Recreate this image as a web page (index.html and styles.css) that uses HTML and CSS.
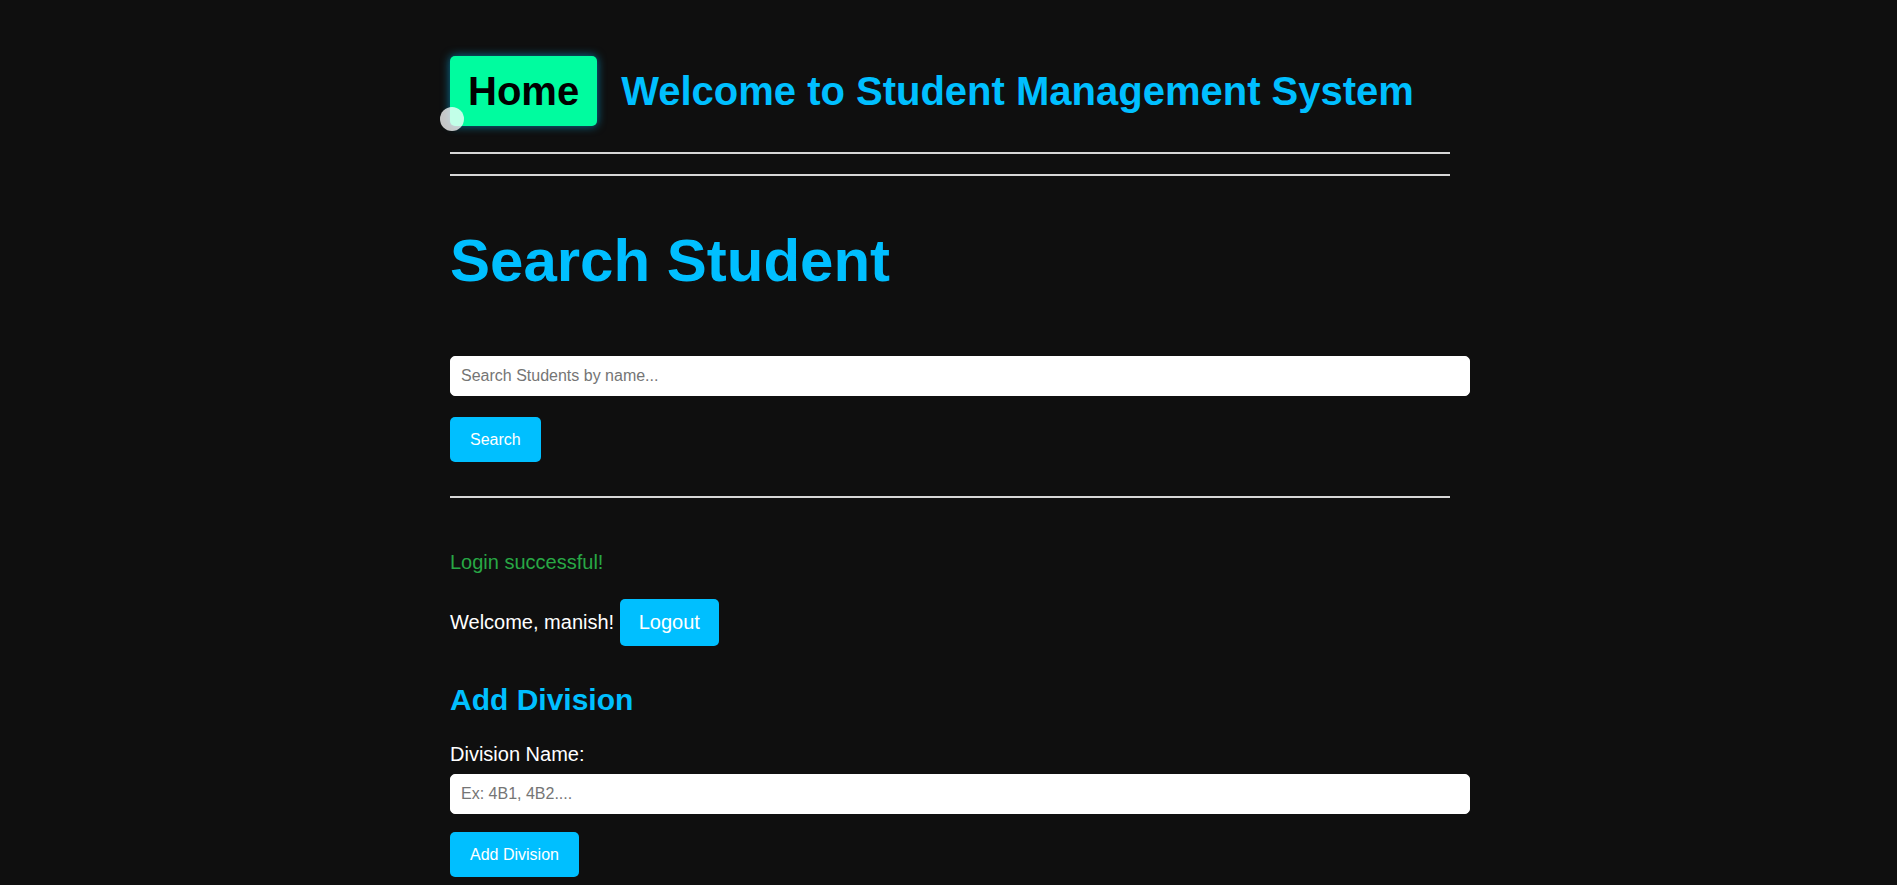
FILE: index.html
```html
<!DOCTYPE html>
<html lang="en">
<head>
<meta charset="utf-8">
<title>Student Management System</title>
<link rel="stylesheet" href="styles.css">
</head>
<body>
<div class="container">
  <header class="site-header">
    <a class="home-btn" href="#">Home</a>
    <h1 class="site-title">Welcome to Student Management System</h1>
    <span class="cursor-dot"></span>
  </header>
  <hr class="rule rule-first">
  <hr class="rule rule-second">

  <main>
    <h1 class="page-title">Search Student</h1>
    <form class="search-form">
      <input class="text-input" type="text" placeholder="Search Students by name...">
      <button class="btn btn-submit" type="button">Search</button>
    </form>
    <hr class="rule rule-section">

    <p class="login-msg">Login successful!</p>
    <p class="welcome">Welcome, manish! <button class="btn-logout" type="button">Logout</button></p>

    <h2 class="section-title">Add Division</h2>
    <form class="division-form">
      <label class="field-label" for="division">Division Name:</label>
      <input class="text-input" id="division" type="text" placeholder="Ex: 4B1, 4B2....">
      <button class="btn btn-submit btn-add" type="button">Add Division</button>
    </form>
  </main>
</div>
</body>
</html>
```

FILE: styles.css
```css
html, body {
  background: #0f0f0f;
}

body {
  margin: 0;
  padding: 0 0 0 3px;
  color: #ffffff;
  font-family: "Liberation Sans", Arial, sans-serif;
  font-size: 20px;
  line-height: 23px;
}

.container {
  width: 1000px;
  margin: 0 auto;
}

.site-header {
  position: relative;
  display: flex;
  align-items: center;
  gap: 24px;
  padding-top: 56px;
}

.home-btn {
  display: block;
  padding: 12px 18px;
  background: #00fc9f;
  color: #000000;
  font-size: 40px;
  font-weight: bold;
  line-height: 46px;
  text-decoration: none;
  border-radius: 5px;
  box-shadow: 0 0 10px rgba(0, 191, 255, 0.6);
}

.site-title {
  margin: 0;
  color: #00bfff;
  font-size: 40px;
  line-height: 46px;
  font-weight: bold;
}

.cursor-dot {
  position: absolute;
  left: -10px;
  top: 107px;
  width: 24px;
  height: 24px;
  border-radius: 50%;
  background: rgba(255, 255, 255, 0.76);
}

.rule {
  display: block;
  height: 2px;
  border: 0;
  margin: 0;
  background: #d6d6d6;
}

.rule-first {
  margin-top: 26px;
}

.rule-second {
  margin-top: 20px;
}

.page-title {
  margin: 50px 0 0;
  color: #00bfff;
  font-size: 60px;
  line-height: 69px;
  font-weight: bold;
}

.search-form {
  margin-top: 61px;
}

.text-input {
  display: block;
  box-sizing: border-box;
  width: calc(100% + 20px);
  height: 40px;
  margin: 0;
  padding: 0 10px;
  border: 1px solid #ffffff;
  border-radius: 5px;
  background: #ffffff;
  color: #000000;
  font-family: "Liberation Sans", Arial, sans-serif;
  font-size: 16px;
  outline: none;
}

.text-input::placeholder {
  color: #757575;
}

.btn {
  display: block;
  margin-top: 21px;
  padding: 13px 20px;
  border: 0;
  border-radius: 5px;
  background: #00bfff;
  color: #ffffff;
  font-family: "Liberation Sans", Arial, sans-serif;
  font-size: 16px;
  line-height: 19px;
  cursor: pointer;
}

.rule-section {
  margin-top: 34px;
}

.login-msg {
  margin: 53px 0 0;
  color: #28a745;
}

.welcome {
  margin: 25px 0 0;
}

.btn-logout {
  display: inline-block;
  padding: 12px 19px;
  border: 0;
  border-radius: 5px;
  background: #00bfff;
  color: #ffffff;
  font-family: "Liberation Sans", Arial, sans-serif;
  font-size: 20px;
  line-height: 23px;
  cursor: pointer;
}

.section-title {
  margin: 37px 0 0;
  color: #00bfff;
  font-size: 30px;
  line-height: 34px;
  font-weight: bold;
}

.division-form {
  margin-top: 26px;
}

.field-label {
  display: block;
  margin-bottom: 8px;
}

.btn-add {
  margin-top: 18px;
}
```
